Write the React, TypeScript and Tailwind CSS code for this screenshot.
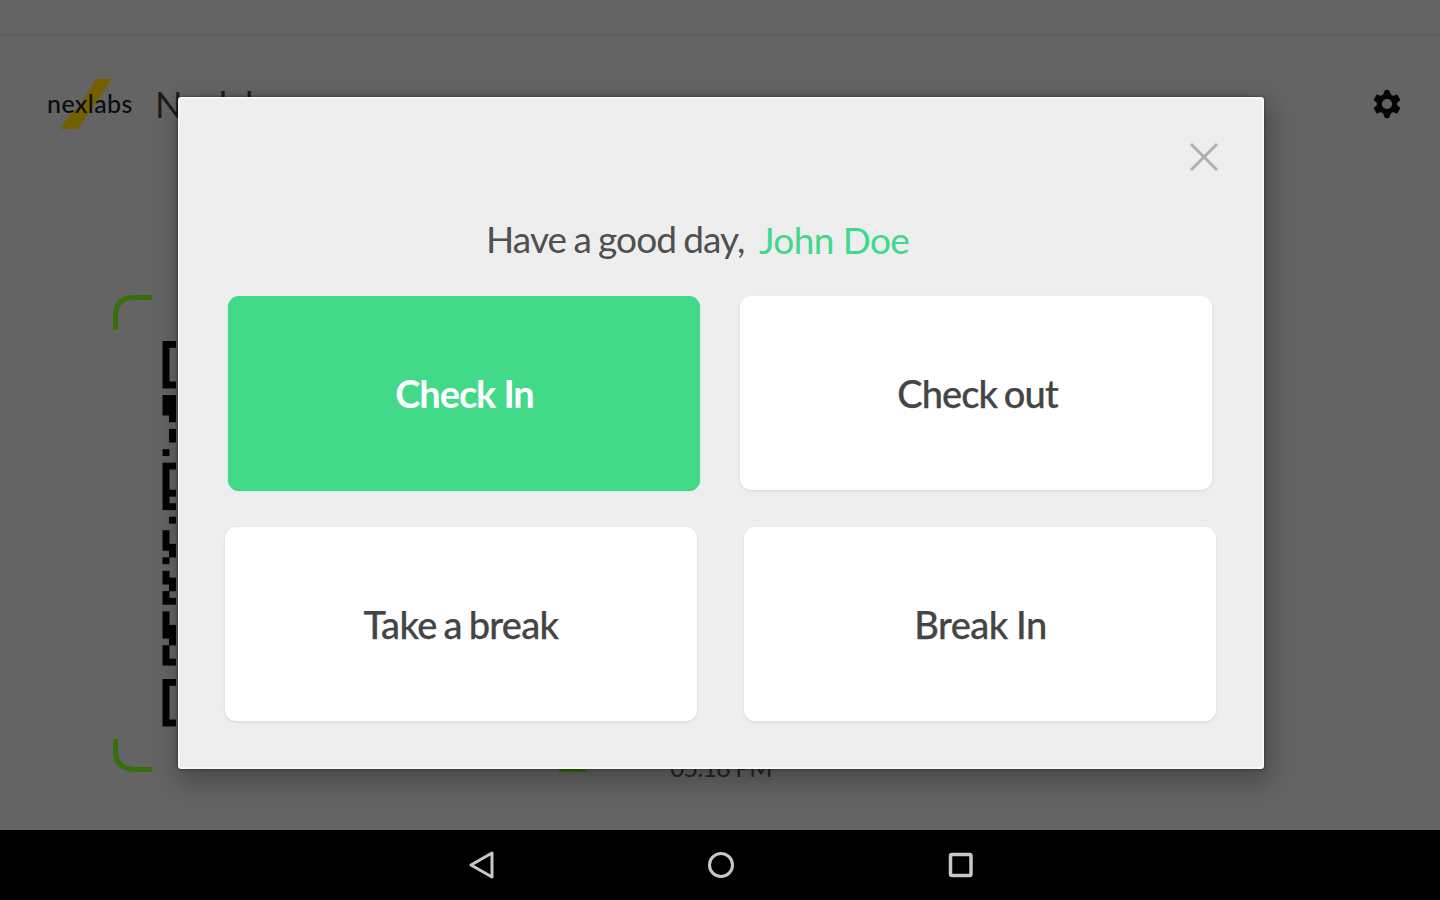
const QR_CELLS: [number, number, number][] = [
  // column, first row, number of rows
  [0, 0, 7], [1, 0, 1], [1, 6, 1],
  [0, 8, 3], [1, 8, 4], [1, 13, 2], [0, 16, 1],
  [0, 18, 7], [1, 18, 1], [1, 22, 1], [1, 24, 1], [1, 26, 1],
  [0, 28, 3], [1, 30, 2], [0, 32, 1],
  [0, 34, 2], [1, 35, 2], [0, 37, 2], [1, 38, 1],
  [0, 40, 4], [1, 42, 3], [0, 45, 3], [1, 47, 1],
  [0, 50, 7], [1, 50, 1], [1, 56, 1],
];

function Logo() {
  return (
    <div className="relative flex h-[52px] w-[84px] items-center">
      <svg className="absolute inset-0" width="84" height="52" viewBox="0 0 84 52">
        <path d="M49 1h16L56 14L31 51H13L24 35l8-6Z" fill="#756000" />
      </svg>
      <span className="relative font-['Lato'] text-[25px] leading-none font-medium tracking-[0.4px] text-[#0c0c0c]">
        nexlabs
      </span>
    </div>
  );
}

function Gear() {
  return (
    <svg width="34" height="34" viewBox="0 0 24 24" fill="#050505">
      <path d="M19.14 12.94c.04-.3.06-.61.06-.94 0-.32-.02-.64-.07-.94l2.03-1.58a.49.49 0 0 0 .12-.61l-1.92-3.32a.488.488 0 0 0-.59-.22l-2.39.96c-.5-.38-1.03-.7-1.620-.94L13.500 2.300Q12 1.500 10.500 2.300L9.250 5.350c-.59.24-1.13.57-1.620.94l-2.390-.96c-.22-.08-.47 0-.59.22L2.740 8.870c-.12.21-.08.47.12.61l2.030 1.580c-.05.3-.09.63-.09.94s.02.64.07.94l-2.030 1.580a.49.49 0 0 0-.12.61l1.920 3.320c.12.22.37.29.59.22l2.390-.96c.5.38 1.030.7 1.620.94L10.500 21.700Q12 22.500 13.500 21.700L14.750 18.650c.59-.24 1.130-.56 1.620-.94l2.390.96c.22.08.47 0 .59-.22l1.920-3.320c.12-.22.07-.47-.12-.61l-2.010-1.580zM12 15.600A3.600 3.600 0 1 1 12 8.400a3.600 3.600 0 0 1 0 7.200z" />
    </svg>
  );
}

function QrPanel() {
  return (
    <svg width="480" height="480" viewBox="0 0 480 480" fill="none">
      <path d="M3.500 36V22Q3.500 3.500 22 3.500H40M3.500 445V457Q3.500 475.500 24 475.500H40M447 475.500H475" stroke="#366f0c" strokeWidth="5" strokeLinecap="butt" />
      <g fill="#030303">
        {QR_CELLS.map(([col, row, count]) => (
          <rect key={`${col}-${row}`} x={50.5 + col * 6.5} y={47 + row * 6.76} width="7" height={count * 6.76 + 0.1} />
        ))}
      </g>
    </svg>
  );
}

function Choice({ label, className }: { label: string; className: string }) {
  return (
    <button className={`flex h-[194px] w-[472px] items-center justify-center rounded-[11px] text-[38px] leading-none whitespace-nowrap ${className}`}>
      <span>{label}</span>
    </button>
  );
}

function Modal() {
  return (
    <section className="absolute top-[97px] left-[178px] flex h-[672px] w-[1086px] flex-col rounded-[3px] border-2 border-[#f7f7f7] bg-[#eeeeee] shadow-[3px_10px_26px_3px_rgba(0,0,0,0.28),0_0_3px_1px_rgba(0,0,0,0.25)]">
      <div className="flex h-[118px] justify-end pt-[43px] pr-[43px]">
        <svg width="30" height="30" viewBox="0 0 30 30" stroke="#b0b0b0" strokeWidth="3">
          <path d="M2 2L28 28M28 2L2 28" />
        </svg>
      </div>
      <h1 className="flex h-[79px] pt-[2px] pl-[306px] text-[37px] leading-[40px] whitespace-nowrap text-[#505050]">
        <span className="w-[273px] tracking-[-0.9px] [word-spacing:-1.4px]">Have a good day,</span>
        <span className="pt-px tracking-[-0.6px] text-[#40d98a]">John Doe</span>
      </h1>
      <div className="flex gap-[40px] pl-[48px]">
        <Choice label="Check In" className="bg-[#42da89] pl-px font-bold tracking-[-1.1px] text-white shadow-[0_1px_1px_#2bd37a]" />
        <Choice label="Check out" className="bg-white pl-[3px] font-medium tracking-[-0.9px] text-[#454545] shadow-[0_1px_3px_rgba(0,0,0,0.1)] [word-spacing:-2px] [-webkit-text-stroke:0.25px_#454545]" />
      </div>
      <div className="mt-[37px] flex gap-[47px] pl-[45px]">
        <Choice label="Take a break" className="bg-white font-medium tracking-[-0.7px] text-[#454545] shadow-[0_1px_3px_rgba(0,0,0,0.1)] [word-spacing:-2px] [-webkit-text-stroke:0.25px_#454545]" />
        <Choice label="Break In" className="bg-white pl-px font-medium tracking-[-0.5px] text-[#454545] shadow-[0_1px_3px_rgba(0,0,0,0.1)] [word-spacing:-1px] [-webkit-text-stroke:0.25px_#454545]" />
      </div>
    </section>
  );
}

export default function App() {
  return (
    <main className="relative flex h-[900px] w-[1440px] flex-col overflow-hidden bg-[#646464] font-['Lato',sans-serif]">
      <div className="h-[36px] shrink-0 border-b-2 border-[#5d5d5d]" />
      <header className="flex h-[135px] shrink-0 items-center justify-between pr-[36px] pl-[47px]">
        <div className="flex items-center gap-[24px]">
          <Logo />
          <span className="font-['Lato'] text-[36px] leading-none font-normal text-[#1c1c1c]">Nexlabs</span>
        </div>
        <Gear />
      </header>
      <div className="flex flex-1 pt-[123px] pl-[112px]">
        <QrPanel />
        <div className="flex h-[488px] items-end pl-[78px] text-[25px] leading-[30px] tracking-[-0.9px] text-[#242424]">05:18 PM</div>
      </div>
      <nav className="flex h-[70px] shrink-0 items-center justify-center gap-[212px] bg-black pl-[2px] text-[#c8c8c8]">
        <svg width="28" height="32" viewBox="0 0 28 32" fill="none" stroke="currentColor" strokeWidth="3">
          <path d="M4 16L25 4V28Z" strokeLinejoin="round" />
        </svg>
        <svg width="28" height="32" viewBox="0 0 28 32" fill="none" stroke="currentColor" strokeWidth="3">
          <circle cx="14" cy="16" r="11.500" />
        </svg>
        <svg width="28" height="32" viewBox="0 0 28 32" fill="none" stroke="currentColor" strokeWidth="3.500">
          <rect x="3.500" y="5.500" width="20.500" height="21" rx="1.500" />
        </svg>
      </nav>
      <Modal />
    </main>
  );
}
